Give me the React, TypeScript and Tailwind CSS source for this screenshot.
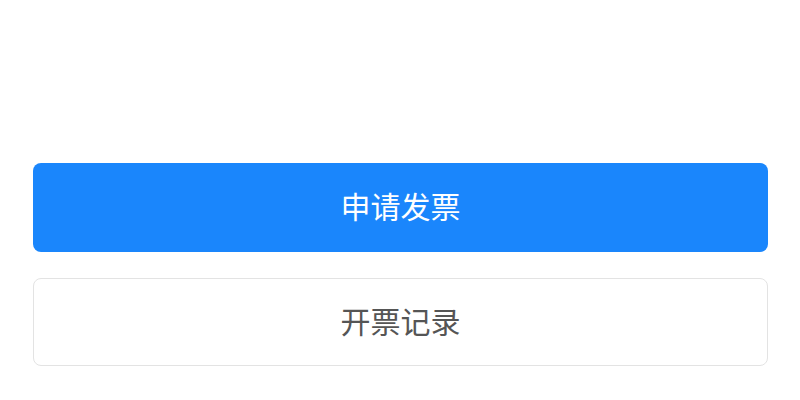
export default function App() {
  return (
    <div
      className="w-[800px] h-[400px] bg-white px-[33px] pt-[163px] flex flex-col gap-[26px]"
      style={{ fontFamily: '"Noto Sans CJK SC", "Noto Sans", sans-serif' }}
    >
      <button className="h-[89px] w-[735px] rounded-[8px] bg-[#1a86fc] text-white text-[30px] leading-none pb-[5px] flex items-center justify-center">
        申请发票
      </button>
      <button className="h-[88px] w-[735px] rounded-[8px] bg-white border border-[#e3e3e3] text-[#555555] text-[30px] leading-none pb-[5px] flex items-center justify-center">
        开票记录
      </button>
    </div>
  );
}
